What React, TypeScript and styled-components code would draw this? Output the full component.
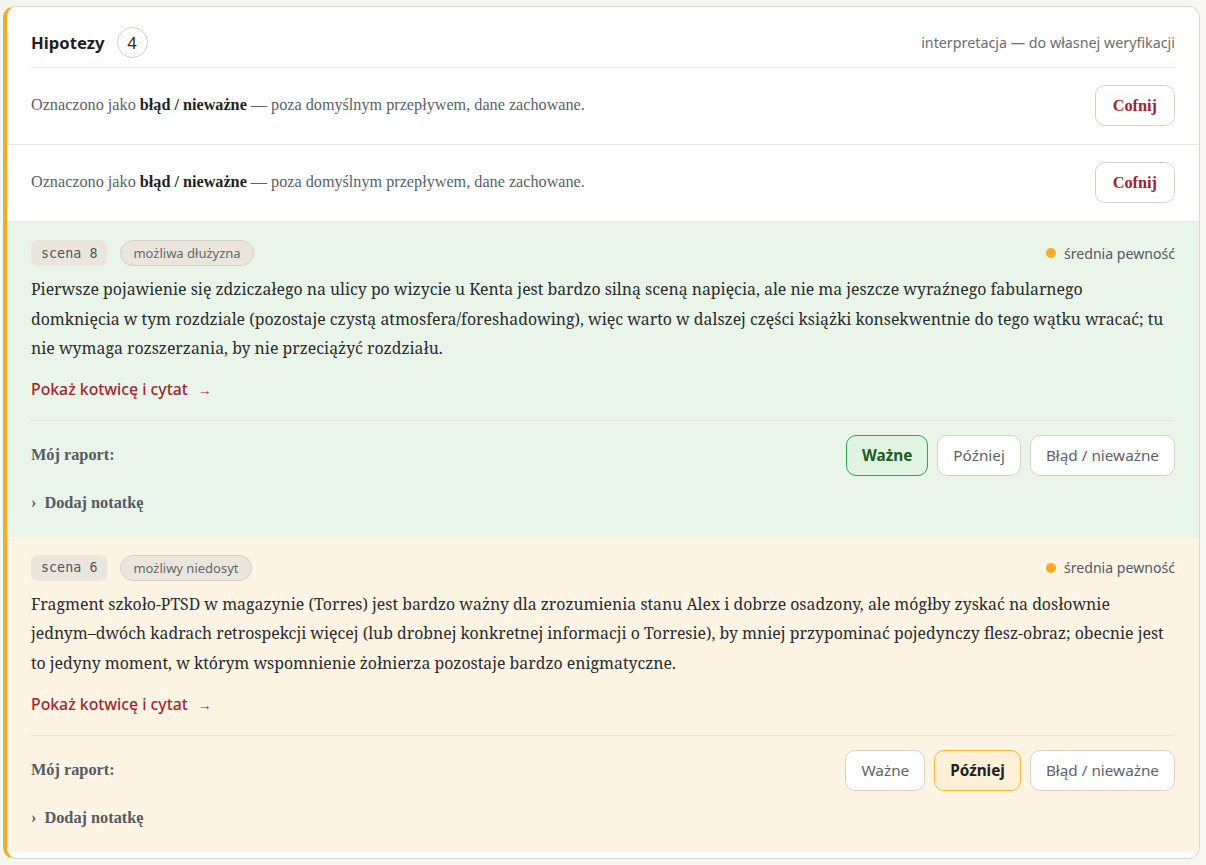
import styled, { createGlobalStyle } from "styled-components";

const bodySerif = `"Noto Serif", "Liberation Serif", serif`;
const serif = `"Liberation Serif", "Times New Roman", serif`;
const sans = `"Noto Sans", "Open Sans", sans-serif`;

const GlobalStyle = createGlobalStyle`
  body {
    margin: 0;
    background: #f8f6f1;
    font-family: ${sans};
  }
`;

const Page = styled.div`
  padding: 6px 6px 6px 3px;
`;

const Card = styled.div`
  background: #ffffff;
  border: 1px solid #ddd6ca;
  border-left: 4px solid #f5ab25;
  border-radius: 12px;
  padding-bottom: 6px;
  overflow: hidden;
`;

const Header = styled.div`
  display: flex;
  align-items: center;
  justify-content: space-between;
  margin: 0 24px;
  padding: 20px 0 9px;
  border-bottom: 1px solid #ebe7e0;
`;

const TitleGroup = styled.div`
  display: flex;
  align-items: center;
  gap: 12px;
`;

const Title = styled.h2`
  margin: 0;
  font-size: 16.7px;
  font-weight: 700;
  color: #1f1f24;
`;

const Count = styled.span`
  display: inline-flex;
  align-items: center;
  justify-content: center;
  width: 31px;
  height: 31px;
  box-sizing: border-box;
  border: 1px solid #d6cfc2;
  border-radius: 50%;
  font-size: 16.5px;
  color: #2a2a2a;
`;

const Note = styled.span`
  font-size: 14.3px;
  color: #6c6c72;
`;

const DismissedRow = styled.div`
  display: flex;
  align-items: center;
  justify-content: space-between;
  padding: 17px 24px 18px;
  border-bottom: 1px solid #ebe7e0;
`;

const DismissedText = styled.p`
  margin: 0;
  font-family: ${serif};
  font-size: 16.2px;
  color: #5a5f6b;

  b {
    color: #1f1f24;
  }
`;

const UndoButton = styled.button`
  height: 41px;
  padding: 0 17px;
  background: #ffffff;
  border: 1px solid #d9d1c4;
  border-radius: 10px;
  font-family: ${serif};
  font-size: 16.3px;
  font-weight: 700;
  color: #9c2230;
  cursor: pointer;
`;

const Section = styled.section<{ $tone: "green" | "amber" }>`
  background: ${(p) => (p.$tone === "green" ? "#e9f5e9" : "#fdf4e3")};
  padding: 18px 24px 24px;
`;

const TagRow = styled.div`
  display: flex;
  align-items: center;
  justify-content: space-between;
`;

const Tags = styled.div`
  display: flex;
  align-items: center;
  gap: 13px;
`;

const SceneChip = styled.span`
  display: inline-flex;
  align-items: center;
  height: 26px;
  padding: 0 10px;
  background: #ebe6dc;
  border-radius: 6px;
  font-family: "DejaVu Sans Mono", monospace;
  font-size: 13.4px;
  color: #55555a;
  white-space: pre;
`;

const KindPill = styled.span`
  display: inline-flex;
  align-items: center;
  height: 24px;
  padding: 0 12px;
  background: #ebe6dc;
  border: 1px solid #d6cfc2;
  border-radius: 13px;
  font-size: 13px;
  color: #66666b;
`;

const Confidence = styled.span`
  display: inline-flex;
  align-items: center;
  gap: 8px;
  font-size: 14.1px;
  color: #55585f;

  &::before {
    content: "";
    width: 10px;
    height: 10px;
    border-radius: 50%;
    background: #f5ab25;
  }
`;

const Body = styled.p`
  margin: 9px 0 0;
  font-family: ${bodySerif};
  font-size: 15.85px;
  line-height: 29.6px;
  color: #2a2a2e;
`;

const AnchorLink = styled.a`
  display: inline-block;
  margin-top: 15px;
  font-size: 15.8px;
  line-height: 20px;
  font-weight: 500;
  color: #a2262f;
  text-decoration: none;
  cursor: pointer;

  span {
    margin-left: 10px;
    font-size: 14px;
  }
`;

const ReportRow = styled.div`
  display: flex;
  align-items: center;
  justify-content: space-between;
  margin-top: 20px;
  padding-top: 14px;
  border-top: 1px solid #ece2da;
`;

const ReportLabel = styled.span`
  font-family: ${serif};
  font-size: 16.3px;
  font-weight: 700;
  color: #545a66;
`;

const Choices = styled.div`
  display: flex;
  gap: 9px;
`;

const ChoiceButton = styled.button<{ $active?: "green" | "amber" }>`
  height: 41px;
  padding: 0 15px;
  border-radius: 10px;
  font-family: ${sans};
  font-size: 15.3px;
  cursor: pointer;
  background: ${(p) =>
    p.$active === "green" ? "#e1f3e1" : p.$active === "amber" ? "#fdf0d8" : "#ffffff"};
  border: 1px solid
    ${(p) =>
      p.$active === "green" ? "#32a547" : p.$active === "amber" ? "#f3b431" : "#d9d1c4"};
  color: ${(p) =>
    p.$active === "green" ? "#1d5b22" : p.$active ? "#222226" : "#5d616c"};
  font-weight: ${(p) => (p.$active ? 700 : 400)};
`;

const AddNote = styled.div`
  margin-top: 17px;
  font-family: ${serif};
  font-size: 16.3px;
  line-height: 20px;
  font-weight: 700;
  color: #545a66;
  cursor: pointer;

  span {
    margin-right: 8px;
  }
`;

type Choice = "wazne" | "pozniej" | "blad";

type Hypothesis = {
  scene: number;
  kind: string;
  text: string;
  choice: Choice;
  tone: "green" | "amber";
};

const hypotheses: Hypothesis[] = [
  {
    scene: 8,
    kind: "możliwa dłużyzna",
    text:
      "Pierwsze pojawienie się zdziczałego na ulicy po wizycie u Kenta jest bardzo silną sceną napięcia, ale nie ma jeszcze wyraźnego fabularnego domknięcia w tym rozdziale (pozostaje czystą atmosfera/foreshadowing), więc warto w dalszej części książki konsekwentnie do tego wątku wracać; tu nie wymaga rozszerzania, by nie przeciążyć rozdziału.",
    choice: "wazne",
    tone: "green",
  },
  {
    scene: 6,
    kind: "możliwy niedosyt",
    text:
      "Fragment szkoło-PTSD w magazynie (Torres) jest bardzo ważny dla zrozumienia stanu Alex i dobrze osadzony, ale mógłby zyskać na dosłownie jednym–dwóch kadrach retrospekcji więcej (lub drobnej konkretnej informacji o Torresie), by mniej przypominać pojedynczy flesz-obraz; obecnie jest to jedyny moment, w którym wspomnienie żołnierza pozostaje bardzo enigmatyczne.",
    choice: "pozniej",
    tone: "amber",
  },
];

const choiceLabels: { key: Choice; label: string }[] = [
  { key: "wazne", label: "Ważne" },
  { key: "pozniej", label: "Później" },
  { key: "blad", label: "Błąd / nieważne" },
];

export default function App() {
  return (
    <>
      <GlobalStyle />
      <Page>
        <Card>
          <Header>
            <TitleGroup>
              <Title>Hipotezy</Title>
              <Count>4</Count>
            </TitleGroup>
            <Note>interpretacja — do własnej weryfikacji</Note>
          </Header>

          {[0, 1].map((i) => (
            <DismissedRow key={i}>
              <DismissedText>
                Oznaczono jako <b>błąd / nieważne</b> — poza domyślnym przepływem, dane zachowane.
              </DismissedText>
              <UndoButton>Cofnij</UndoButton>
            </DismissedRow>
          ))}

          {hypotheses.map((h) => (
            <Section key={h.scene} $tone={h.tone}>
              <TagRow>
                <Tags>
                  <SceneChip>scena {h.scene}</SceneChip>
                  <KindPill>{h.kind}</KindPill>
                </Tags>
                <Confidence>średnia pewność</Confidence>
              </TagRow>
              <Body>{h.text}</Body>
              <AnchorLink>
                Pokaż kotwicę i cytat<span>→</span>
              </AnchorLink>
              <ReportRow>
                <ReportLabel>Mój raport:</ReportLabel>
                <Choices>
                  {choiceLabels.map((c) => (
                    <ChoiceButton
                      key={c.key}
                      $active={c.key === h.choice ? (c.key === "wazne" ? "green" : "amber") : undefined}
                    >
                      {c.label}
                    </ChoiceButton>
                  ))}
                </Choices>
              </ReportRow>
              <AddNote>
                <span>›</span>Dodaj notatkę
              </AddNote>
            </Section>
          ))}
        </Card>
      </Page>
    </>
  );
}
